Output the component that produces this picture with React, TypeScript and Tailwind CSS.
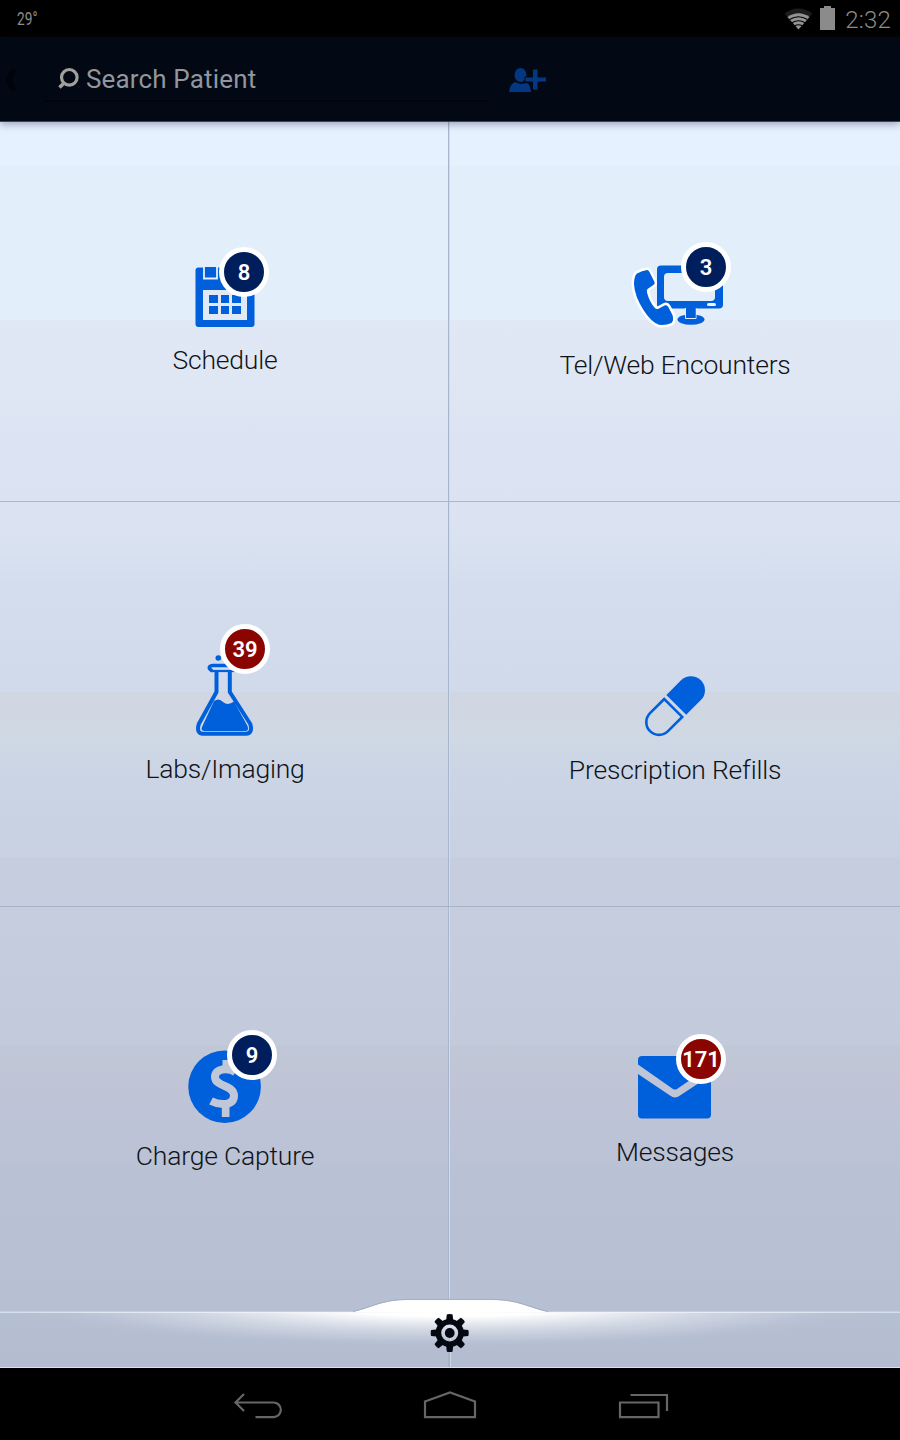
import type { ReactNode } from "react";

const BLUE = "#005fdb";

function Badge({ count, className }: { count: number; className: string }) {
  return (
    <span
      className={`absolute flex size-[50px] items-center justify-center rounded-full border-[5.5px] border-white pt-px text-[22px] font-semibold leading-none text-white ${className}`}
    >
      {count}
    </span>
  );
}

function Tile({ label, icon, badge, className, labelClass }: {
  label: string;
  icon: ReactNode;
  badge?: ReactNode;
  className: string;
  labelClass: string;
}) {
  return (
    <button
      className={`flex flex-col items-center odd:shadow-[inset_-1px_0_0_#d2ddec,inset_-2px_0_0_#a7b6cc] ${className}`}
    >
      <span className="relative block">
        {icon}
        {badge}
      </span>
      <span className={`whitespace-nowrap text-[26.5px] leading-[30px] font-[340] tracking-[-0.2px] text-[#101418] ${labelClass}`}>
        {label}
      </span>
    </button>
  );
}

function CalendarIcon() {
  return (
    <svg className="block" width="60" height="60" viewBox="195 267 60 60">
      <rect x="195.500" y="267.500" width="59" height="59.500" rx="3" fill={BLUE} />
      <path d="M204 266V278.500H217V266M231.500 266V278.500H245.500V266" fill={BLUE} stroke="#e8f1fb" strokeWidth="1.800" />
      <rect x="203" y="290" width="44" height="30" fill="#e1e9f7" />
      <path d="M209 295h9v8h-9zM221 295h8v8h-8zM232 295h9v8h-9zM209 306h9v8h-9zM221 306h8v8h-8zM232 306h9v8h-9z" fill={BLUE} />
    </svg>
  );
}

function TelWebIcon() {
  return (
    <svg className="block overflow-visible" width="96" height="66" viewBox="627 262 96 66">
      <path fillRule="evenodd" d="M661 265.500h58q4 0 4 4v35q0 4-4 4h-58q-4 0-4-4v-35q0-4 4-4zM668 273q-4 0-4 4v20q0 4 4 4h43q4 0 4-4v-20q0-4-4-4z" fill={BLUE} />
      <rect x="707" y="303" width="9" height="3" rx="1.500" fill="#eef5ff" />
      <ellipse cx="691" cy="319.500" rx="13.500" ry="5.300" fill={BLUE} />
      <path d="M685.500 308v10.500h10.500v-10.500" fill={BLUE} stroke="#e5edfa" strokeWidth="1" />
      <path d="M686 307h9.500v11h-9.500z" fill={BLUE} />
      <path
        d="M637 273.500 Q642 270.500 647 270 Q648.500 270 649.500 272 L654.500 282 Q655 283.500 654 284.500 L647.500 289 Q646.500 290 647 292.500 Q649.500 302 654.500 307.500 Q656 309.500 658 309 L664.500 305.500 Q666.500 304.500 668 306.500 L672.500 315 Q674 320 671.500 323 Q666 325.500 659 324.800 Q651 322 643.500 310 Q634.500 296 634 284 Q634 276 637 273.500Z"
        fill={BLUE}
        stroke="white"
        strokeWidth="5"
        strokeLinejoin="round"
        paintOrder="stroke"
      />
    </svg>
  );
}

function FlaskIcon() {
  return (
    <svg className="block" width="60" height="82" viewBox="195 655 60 82">
      <circle cx="218.300" cy="658" r="2.800" fill={BLUE} />
      <path d="M211.500 670.500C207.500 668 209.500 665.500 213 665.500H235" fill="none" stroke={BLUE} strokeWidth="3.500" strokeLinecap="round" />
      <path d="M211 671H235" fill="none" stroke={BLUE} strokeWidth="2.200" />
      <path d="M216.500 671V692L198.800 724Q196 733.500 203 733.700H246Q253 733.500 250.300 724L229.800 692V671" fill="none" stroke={BLUE} strokeWidth="4" strokeLinejoin="round" />
      <path d="M214 701Q219 697.500 223 702Q228 706 234 701.500L247.500 726Q249 730.500 246 731H204Q200.500 730 202 727Z" fill={BLUE} />
    </svg>
  );
}

function PillIcon() {
  return (
    <svg className="block overflow-visible" width="60" height="60" viewBox="645 676 60 60">
      <g transform="translate(675 706.200) rotate(-45)">
        <path d="M1.800-14H22.600A14 14 0 0 1 22.600 14H1.800Z" fill={BLUE} />
        <path d="M-2.500-12.700H-22.600A12.700 12.700 0 0 0-22.600 12.700H-2.500Z" fill="none" stroke={BLUE} strokeWidth="2.600" />
      </g>
    </svg>
  );
}

function DollarIcon() {
  return (
    <svg className="block" width="74" height="74" viewBox="188 1050 74 74">
      <circle cx="224.600" cy="1086.700" r="36.300" fill={BLUE} />
      <path d="M235.500 1072C228 1067.500 215 1068 215 1077C215 1087 234 1084.500 234 1095.500C234 1106 220 1105.500 211 1101" fill="none" stroke="#c0c7d8" strokeWidth="8" />
      <path d="M222.500 1060H230V1072H222.500ZM221.800 1102H229.500V1117H221.800Z" fill="#c0c7d8" />
    </svg>
  );
}

function EnvelopeIcon() {
  return (
    <svg className="block" width="74" height="64" viewBox="638 1056 74 64">
      <path d="M642 1056H707Q711 1056 711 1060V1065.500L677 1089Q675 1090 673 1089L638 1064.500V1060Q638 1056 642 1056Z" fill={BLUE} />
      <path d="M638 1074L670 1095.500Q675 1099.500 680 1095.500L711 1075V1114.500Q711 1118.500 707 1118.500H642Q638 1118.500 638 1114.500Z" fill={BLUE} />
    </svg>
  );
}

function StatusBar() {
  return (
    <div className="flex h-[37px] items-center bg-black pl-[17px] pr-[9px] text-[#8c8c8c]">
      <span className="h-[21px] w-[23px] whitespace-nowrap">
        <span className="inline-block origin-left scale-x-[0.76] text-[18px] leading-[21px]">29°</span>
      </span>
      <svg className="ml-auto" width="28" height="22" viewBox="784 7 28 22">
        <path d="M784.500 12.500Q798.500 2.500 812.500 12.500L798.300 28.500Z" fill="#1c1c1c" />
        <path d="M787.500 16Q798.500 8.500 809.500 16L798.500 28.500Z" fill="#929292" />
        <path d="M789.500 18.500Q798.500 13 807.500 18.500M792 21.700Q798.500 17.800 805 21.700M794.500 25Q798.500 22.500 802.500 25" fill="none" stroke="black" strokeWidth="1.100" />
      </svg>
      <svg className="ml-2 -mt-[2px]" width="15" height="24" viewBox="0 0 15 24">
        <path d="M4 0H11V2H15V24H0V2H4Z" fill="#8b8b8b" />
      </svg>
      <span className="ml-[10px] pt-[3px] text-[24px] font-light leading-none tracking-[0.2px]">2:32</span>
    </div>
  );
}

function SearchBar() {
  return (
    <header className="relative z-10 flex h-[85px] items-center border-b border-[#41464e] bg-[#020915] pt-px shadow-[0_2px_8px_rgba(30,35,70,0.4)]">
      <svg className="ml-[6px]" width="11" height="22" viewBox="0 0 11 22">
        <path d="M5 0H11L6 11L11 22H5L0 11Z" fill="#01040a" />
      </svg>
      <div className="ml-7 flex h-[45px] w-[444px] items-center border-b-2 border-[#01040b] pl-3">
        <svg className="-mt-px" width="22" height="22" viewBox="57 67 22 22">
          <circle cx="69.300" cy="77.300" r="7.800" fill="none" stroke="#a0a09d" strokeWidth="3.200" />
          <path d="M64 83L59.500 87.500" stroke="#a0a09d" strokeWidth="3.500" />
        </svg>
        <span className="ml-[7px] pt-px text-[26px] leading-8 font-[370] tracking-[0.15px] text-[#93969a]">Search Patient</span>
      </div>
      <svg className="ml-5" width="38" height="26" viewBox="509 67 38 26">
        <ellipse cx="520.500" cy="75" rx="6" ry="7" fill="#043782" />
        <path d="M509 92Q510 84 515 82L520.500 84L527 83Q530.500 85 531 92Z" fill="#043782" />
        <path d="M532.500 69H538V77H546.500V82H538V90H532.500V82H525V77H532.500Z" fill="#043782" stroke="#020915" strokeWidth="1" />
      </svg>
    </header>
  );
}

function SettingsDock() {
  return (
    <svg className="absolute bottom-0 left-0 block" width="900" height="70" viewBox="0 1298 900 70">
      <defs>
        <radialGradient id="glow" gradientUnits="userSpaceOnUse" cx="0" cy="0" r="1" gradientTransform="translate(450 1303) scale(440 45)">
          <stop offset="0" stopColor="#fff" />
          <stop offset="0.300" stopColor="#fff" />
          <stop offset="0.550" stopColor="#dfe3eb" stopOpacity="0.850" />
          <stop offset="0.780" stopColor="#cbd2e1" stopOpacity="0.550" />
          <stop offset="1" stopColor="#b4becf" stopOpacity="0" />
        </radialGradient>
        <linearGradient id="edge">
          <stop offset="0" stopColor="#d4dfed" />
          <stop offset="0.500" stopColor="#fff" />
          <stop offset="1" stopColor="#d4dfed" />
        </linearGradient>
        <linearGradient id="base" x2="0" y2="1">
          <stop offset="0" stopColor="#b7c1d3" />
          <stop offset="1" stopColor="#b3bcd0" />
        </linearGradient>
      </defs>
      <path d="M0 1312H353C371 1308 382 1300 407 1300H493C518 1300 529 1308 548 1312H900V1368H0Z" fill="url(#base)" />
      <path d="M449 1330V1367" stroke="#a5b3ca" strokeWidth="2" />
      <path d="M450.500 1330V1367" stroke="#cad5e5" />
      <path d="M0 1312H353C371 1308 382 1300 407 1300H493C518 1300 529 1308 548 1312H900V1368H0Z" fill="url(#glow)" />
      <path d="M0 1311.500H353C371 1307.500 382 1299.500 407 1299.500H493C518 1299.500 529 1307.500 548 1311.500H900" fill="none" stroke="#a3afc4" />
      <path d="M0 1312H353M548 1312H900" stroke="#e3eaf3" />
      <rect y="1312" width="900" height="1" fill="url(#edge)" />
      <rect y="1367" width="900" height="1" fill="#dbe4ee" />
      <g transform="translate(449.700 1333)" fill="#030811">
        {[0, 45, 90, 135, 180, 225, 270, 315].map((angle) => (
          <path key={angle} transform={`rotate(${angle})`} d="M-3.700-11L-2.900-18.500Q-2.500-19 0-19Q2.500-19 2.900-18.500L3.700-11Z" />
        ))}
        <circle r="11.300" fill="none" stroke="#030811" strokeWidth="5.600" />
        <circle r="4.900" />
      </g>
    </svg>
  );
}

function NavigationBar() {
  return (
    <nav className="flex h-[72px] items-center bg-black pl-[233px] pt-[3px]">
      <svg width="50" height="30" viewBox="233 1391 50 30" fill="none" stroke="#666" strokeWidth="2.200">
        <path d="M244 1394L235.500 1402.500L244 1411M236 1402.500H273.500A7.300 7.300 0 0 1 273.500 1417.200H255.500" />
      </svg>
      <svg className="ml-[140px]" width="54" height="30" viewBox="423 1391 54 30" fill="none" stroke="#666" strokeWidth="2.200">
        <path d="M425 1401.500L450 1392.500L475 1401.500V1417.200H425Z" />
      </svg>
      <svg className="ml-[141px]" width="51" height="30" viewBox="618 1391 51 30" fill="none" stroke="#666" strokeWidth="2.200">
        <path d="M620 1402.500H658.500V1417.200H620ZM630.500 1395H667V1411" />
      </svg>
    </nav>
  );
}

export default function App() {
  return (
    <div className="flex h-[1440px] w-[900px] flex-col overflow-hidden bg-black font-['Roboto',sans-serif]">
      <StatusBar />
      <SearchBar />
      <main className="relative h-[1246px] bg-[linear-gradient(#e6f1ff_0px,#e6f1ff_44px,#e3eefb_44px,#e3eefb_198px,#e0e8f6_198px,#dfe7f4_260px,#dce4f3_312px,#dbe3f3_413px,#d6e0ee_440px,#d3ddee_465px,#d1daeb_570px,#d0d6e2_570px,#cfd8e4_613px,#cbd5e5_648px,#c8d1e2_735px,#c5cdde_736px,#c5cdde_800px,#c2cadb_923px,#c0c7d5_924px,#bfc5d6_960px,#bdc3d7_1020px,#b9c2d4_1050px,#b8c1d3_1110px,#b7c0d2_1190px)]">
        <div className="grid grid-cols-2 grid-rows-[380px_405px_405px]">
          <Tile
            label="Schedule"
            icon={<CalendarIcon />}
            badge={<Badge count={8} className="-top-5 left-6 bg-[#001e5c]" />}
            className="border-b border-[#aab7cb] pt-[145px]"
            labelClass="mt-[18px]"
          />
          <Tile
            label="Tel/Web Encounters"
            icon={<TelWebIcon />}
            badge={<Badge count={3} className="-top-5 left-[54px] bg-[#001e5c]" />}
            className="border-b border-[#aab7cb] pt-[140px]"
            labelClass="mt-[22px]"
          />
          <Tile
            label="Labs/Imaging"
            icon={<FlaskIcon />}
            badge={<Badge count={39} className="-top-[31px] left-[25px] bg-[#8b0500]" />}
            className="border-b border-[#a5b2c7] pt-[153px]"
            labelClass="mt-[17px]"
          />
          <Tile
            label="Prescription Refills"
            icon={<PillIcon />}
            className="border-b border-[#a5b2c7] pt-[174px]"
            labelClass="mt-[19px]"
          />
          <Tile
            label="Charge Capture"
            icon={<DollarIcon />}
            badge={<Badge count={9} className="-top-5 left-[39px] bg-[#001e5c]" />}
            className="pt-[143px]"
            labelClass="mt-[17px]"
          />
          <Tile
            label="Messages"
            icon={<EnvelopeIcon />}
            badge={<Badge count={171} className="-top-[22px] left-[38px] bg-[#8b0500]" />}
            className="pt-[149px]"
            labelClass="mt-[17px]"
          />
        </div>
        <SettingsDock />
      </main>
      <NavigationBar />
    </div>
  );
}
